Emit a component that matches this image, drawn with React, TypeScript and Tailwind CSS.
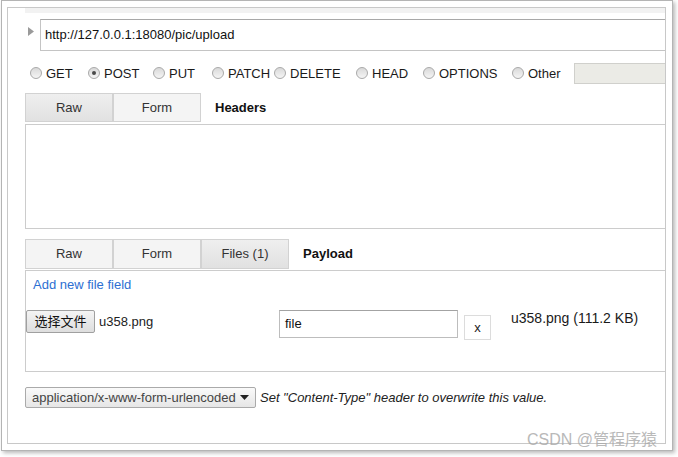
import React from "react";

const radios: { label: string; w: string; checked?: boolean }[] = [
  { label: "GET", w: "w-[58px]" },
  { label: "POST", w: "w-[65px]", checked: true },
  { label: "PUT", w: "w-[59px]" },
  { label: "PATCH", w: "w-[62px]" },
  { label: "DELETE", w: "w-[82px]" },
  { label: "HEAD", w: "w-[67px]" },
  { label: "OPTIONS", w: "w-[89px]" },
  { label: "Other", w: "w-[62px]" },
];

function Radio({ checked }: { checked?: boolean }) {
  return (
    <span className="mb-[2px] inline-flex h-[12px] w-[12px] shrink-0 items-center justify-center rounded-full border border-[#a9a9a9] bg-linear-to-b from-[#d9d9d9] to-[#f5f5f5]">
      {checked && <span className="h-[4px] w-[4px] rounded-full bg-[#4a4a4a]" />}
    </span>
  );
}

function Tab({ label, active }: { label: string; active?: boolean }) {
  return (
    <div
      className={
        "flex w-[88px] items-center justify-center border border-[#d2d2d2] text-[13px] text-[#333] " +
        (active
          ? "bg-linear-to-b from-[#efefef] to-[#e1e1e1]"
          : "bg-[#f4f4f4]")
      }
    >
      {label}
    </div>
  );
}

export default function App() {
  return (
    <div className="h-[457px] w-[678px] overflow-hidden bg-white pl-[1px] font-['Liberation_Sans','Noto_Sans_CJK_SC',sans-serif] text-[13px] text-[#222]">
      <div className="relative h-[451px] w-[672px] border border-[#b4b4b4] bg-white pl-[5px] pt-[6px] shadow-[2px_2px_4px_rgba(0,0,0,0.28)]">
        <div className="h-[437px] w-[659px] overflow-hidden border border-[#c8c8c8] bg-white">
          <div className="flex w-[700px] flex-col pl-[17px]">
            <div className="h-[5px] bg-[#f2f2f2]" />
            {/* URL row */}
            <div className="mt-[6px] flex">
              <svg width="15" height="32" viewBox="0 0 15 32" className="shrink-0">
                <polygon points="3,8 9,12.5 3,17" fill="#9a9a9a" />
              </svg>
              <div className="flex h-[32px] w-[660px] items-center border border-[#c4c4c4] border-t-[#a8a8a8] pl-[4px] text-[13px] text-[#111]">
                http://127.0.0.1:18080/pic/upload
              </div>
            </div>
            {/* methods */}
            <div className="mt-[12px] flex h-[21px] items-center pl-[5px]">
              {radios.map((r) => (
                <div key={r.label} className={"flex items-center gap-[4px] " + r.w}>
                  <Radio checked={r.checked} />
                  <span className="text-[13px] text-[#1a1a1a]">{r.label}</span>
                </div>
              ))}
              <div className="h-[21px] w-[120px] border border-[#d0d0cc] bg-[#ebebe6]" />
            </div>
            {/* header tabs */}
            <div className="mt-[9px] flex h-[29px]">
              <Tab label="Raw" active />
              <Tab label="Form" />
              <div className="ml-[14px] flex items-center text-[13px] font-bold text-[#111]">Headers</div>
            </div>
            <div className="mt-[2px] h-[105px] w-[680px] border border-[#cccccc] bg-white" />
            {/* payload tabs */}
            <div className="mt-[10px] flex h-[30px]">
              <Tab label="Raw" />
              <Tab label="Form" />
              <Tab label="Files (1)" active />
              <div className="ml-[14px] flex items-center text-[13px] font-bold text-[#111]">Payload</div>
            </div>
            <div className="mt-[1px] h-[102px] w-[680px] border border-[#cccccc] bg-white">
              <div className="pl-[7px] pt-[6px] leading-[16px] text-[#2d6fd2]">Add new file field</div>
              <div className="mt-[17px] flex items-start">
                <div className="flex w-[253px] items-center">
                  <div className="flex h-[23px] w-[69px] items-center justify-center rounded-[2px] border border-[#a0a0a0] bg-linear-to-b from-[#f4f4f4] to-[#dedede] text-[13px] text-[#111]">
                    选择文件
                  </div>
                  <span className="ml-[4px] text-[13px]">u358.png</span>
                </div>
                <div className="flex h-[28px] w-[179px] items-center border border-[#bdbdbd] border-t-[#a3a3a3] pl-[5px] text-[13px] text-[#111]">
                  file
                </div>
                <div className="ml-[6px] mt-[5px] flex h-[25px] w-[27px] items-center justify-center border border-[#dcdcdc] bg-white text-[13px] text-[#222]">
                  x
                </div>
                <div className="ml-[20px] text-[14px] leading-[16px] text-[#1a1a1a]">u358.png (111.2 KB)</div>
              </div>
            </div>
            {/* content type */}
            <div className="mt-[15px] flex h-[21px] items-center">
              <div className="flex h-[21px] w-[231px] items-center justify-between rounded-[2px] border border-[#aaaaaa] bg-linear-to-b from-[#fafafa] to-[#e6e6e6] pl-[6px] pr-[6px] text-[13px] text-[#444]">
                <span>application/x-www-form-urlencoded</span>
                <svg width="9" height="5" viewBox="0 0 9 5">
                  <polygon points="0,0 9,0 4.5,5" fill="#222" />
                </svg>
              </div>
              <span className="ml-[4px] text-[13px] italic text-[#222]">
                Set "Content-Type" header to overwrite this value.
              </span>
            </div>
          </div>
        </div>
        <div className="absolute left-[525px] top-[429px] text-[16px] leading-[20px] text-[#a8a8a8] opacity-80">
          CSDN @管程序猿
        </div>
      </div>
    </div>
  );
}
